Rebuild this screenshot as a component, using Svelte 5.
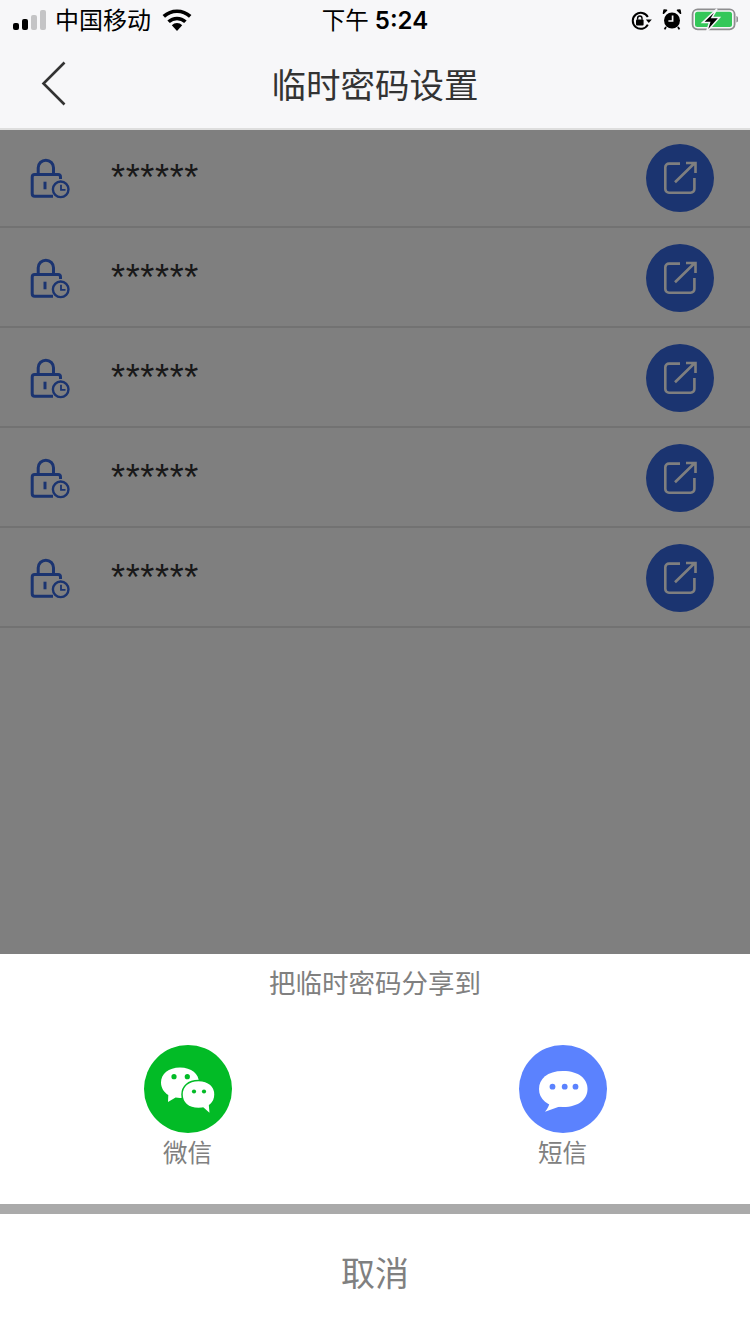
<script>
  // five temporary password rows, all masked
  const rows = [1, 2, 3, 4, 5];
</script>

<div class="page">
  <header class="top">
    <div class="status">
      <div class="left">
        <span class="signal"><i class="on s1"></i><i class="on s2"></i><i class="s3"></i><i class="s4"></i></span>
        <span class="carrier">中国移动</span>
        <svg class="wifi" width="30" height="22" viewBox="0 0 30 22">
          <path d="M15 22 9.800 16.200a7.400 7.400 0 0 1 10.400 0Z" fill="#000" />
          <path d="M6.600 12.800a12.200 12.200 0 0 1 16.800 0" fill="none" stroke="#000" stroke-width="3.600" />
          <path d="M1.800 7.400a19.400 19.400 0 0 1 26.400 0" fill="none" stroke="#000" stroke-width="3.600" />
        </svg>
      </div>
      <div class="time"><span class="cjk">下午</span> 5:24</div>
      <div class="right">
        <svg class="rot" width="22" height="20" viewBox="0 0 22 20">
          <path d="M16.800 13.600A8 8 0 1 1 16.800 6" fill="none" stroke="#000" stroke-width="2" />
          <path d="M14.800 8.400h6l-3 3.600Z" fill="#000" />
          <rect x="5" y="8.600" width="7.600" height="6" rx="1" fill="#000" />
          <path d="M6.600 8.800V7.200a2.200 2.200 0 0 1 4.400 0v1.600" fill="none" stroke="#000" stroke-width="1.400" />
        </svg>
        <svg class="alarm" width="20" height="21" viewBox="0 0 20 21">
          <circle cx="10" cy="11.500" r="8" fill="#000" />
          <path d="M1.400 4.400 4.600 1.200 2 1ZM18.600 4.400 15.400 1.200 18 1Z" fill="#000" stroke="#000" stroke-width="1.400" stroke-linejoin="round" />
          <path d="M4 18 2.600 20.400M16 18l1.400 2.400" stroke="#000" stroke-width="1.800" />
          <path d="M10.600 6.400v5.600H6.400" fill="none" stroke="#f7f7f9" stroke-width="1.700" />
        </svg>
        <svg class="battery" width="47" height="25" viewBox="0 0 47 25">
          <rect x="1.600" y="1.300" width="42" height="20" rx="5" fill="none" stroke="#8e8e90" stroke-width="1.800" />
          <rect x="4" y="3.700" width="37" height="15.200" rx="2.500" fill="#34c759" />
          <path d="M45.400 8v6.600a3.600 3.600 0 0 0 0-6.600Z" fill="#8e8e90" />
          <path d="M26 .8 11.500 14.600h7L15.500 24 28.500 9.600H21Z" fill="#000" stroke="#f7f7f9" stroke-width="1.500" />
        </svg>
      </div>
    </div>
    <nav class="bar">
      <svg class="back" width="26" height="46" viewBox="0 0 26 46">
        <path d="M23.500 1.500 2.500 22.500l21 21" fill="none" stroke="#333" stroke-width="2.600" />
      </svg>
      <h1>临时密码设置</h1>
    </nav>
  </header>

  <ul class="list">
    {#each rows as row (row)}
      <li class="row">
        <svg class="lock" width="42" height="42" viewBox="0 0 42 42">
          <path d="M10.200 16.500V9.800a7.650 7.650 0 0 1 15.300 0v6.700" fill="none" stroke="#3668e0" stroke-width="3" />
          <path d="M25 38.200H6.700a2.500 2.500 0 0 1-2.500-2.500V19a2.500 2.500 0 0 1 2.500-2.500h23.300a2.500 2.500 0 0 1 2.500 2.500v2" fill="none" stroke="#3668e0" stroke-width="3" />
          <path d="M17 23.700v7.600" stroke="#3668e0" stroke-width="3" />
          <circle cx="32.700" cy="31.300" r="7.800" fill="#fff" stroke="#3668e0" stroke-width="2.400" />
          <path d="M33 26.800v5h4.500" fill="none" stroke="#3668e0" stroke-width="1.800" />
        </svg>
        <span class="mask">******</span>
        <button class="edit" type="button" aria-label="分享">
          <svg width="36" height="36" viewBox="0 0 36 36">
            <path d="M18 3.600H7a3.700 3.700 0 0 0-3.700 3.700V29a3.700 3.700 0 0 0 3.700 3.700h21.700a3.700 3.700 0 0 0 3.700-3.700V18" fill="none" stroke="#fff" stroke-width="2.600" />
            <path d="M13 22.300 33 2.800M24 3h9.500v10" fill="none" stroke="#fff" stroke-width="2.600" />
          </svg>
        </button>
      </li>
    {/each}
  </ul>

  <div class="scrim"></div>

  <section class="sheet">
    <p class="title">把临时密码分享到</p>
    <div class="targets">
      <div class="target">
        <span class="disc wechat">
          <svg width="88" height="88" viewBox="0 0 88 88">
            <path d="M36 22.500C47.500 22.500 55 29 55 37.500S47.500 53 36 53c-1.500 0-3-.1-4.400-.4L24 57l.3-7C19.800 47.200 17 42.800 17 37.500 17 29 24.500 22.500 36 22.500Z" fill="#fff" />
            <path d="M54.500 35.500C65 35.500 71 41.500 71 49.500S65 63.500 54.500 63.500 38 57.500 38 49.500 44 35.500 54.500 35.500Z" fill="#fff" stroke="#02bb26" stroke-width="1.500" />
            <path d="M59 62l6.500 5.700-.8-8.700Z" fill="#fff" />
            <circle cx="30" cy="31.700" r="2.600" fill="#02bb26" />
            <circle cx="43.300" cy="31.700" r="2.600" fill="#02bb26" />
            <circle cx="50" cy="46.500" r="2.100" fill="#02bb26" />
            <circle cx="60" cy="46.500" r="2.100" fill="#02bb26" />
          </svg>
        </span>
        <span class="name">微信</span>
      </div>
      <div class="target">
        <span class="disc sms">
          <svg width="88" height="88" viewBox="0 0 88 88">
            <path d="M44 26C60 26 68.500 34 68.500 44S60 62 44 62 20 54 20 44 28 26 44 26Z" fill="#fff" />
            <path d="M31 54c0 5-2 9.500-5 12.700L42 61Z" fill="#fff" />
            <circle cx="33.500" cy="41.700" r="2.900" fill="#5b82fe" />
            <circle cx="45.700" cy="41.700" r="2.900" fill="#5b82fe" />
            <circle cx="56.500" cy="41.700" r="2.900" fill="#5b82fe" />
          </svg>
        </span>
        <span class="name">短信</span>
      </div>
    </div>
    <div class="gap"></div>
    <button class="cancel" type="button">取消</button>
  </section>
</div>

<style>
  :global(body) {
    margin: 0;
  }
  .page {
    position: relative;
    width: 750px;
    height: 1334px;
    overflow: hidden;
    background: #fff;
    font-family: "Noto Sans CJK SC", "Liberation Sans", sans-serif;
  }
  .top {
    position: relative;
    z-index: 1;
    height: 128px;
    background: #f7f7f9;
    border-bottom: 2px solid #dedede;
  }
  .status {
    position: relative;
    display: flex;
    justify-content: space-between;
    align-items: center;
    height: 40px;
    padding: 0 12px 0 13px;
    color: #000;
  }
  .left {
    display: flex;
    align-items: center;
  }
  .signal {
    display: flex;
    align-items: flex-end;
    gap: 3px;
    width: 42px;
    height: 22px;
    margin-top: -3px;
  }
  .signal i {
    width: 6px;
    background: #c4c4c6;
    border-radius: 2px;
  }
  .signal .on {
    background: #000;
  }
  .s1 {
    height: 7px;
  }
  .s2 {
    height: 11px;
  }
  .s3 {
    height: 15px;
  }
  .s4 {
    height: 20px;
  }
  .carrier {
    font-size: 24px;
    line-height: 40px;
    margin-top: -2px;
  }
  .wifi {
    margin-left: 11px;
  }
  .time {
    position: absolute;
    left: 0;
    right: 0;
    top: -1px;
    text-align: center;
    font: 600 24px/40px Inter, "Noto Sans CJK SC", sans-serif;
    pointer-events: none;
  }
  .cjk {
    font: 400 23.500px/40px "Noto Sans CJK SC", sans-serif;
  }
  .right {
    display: flex;
    align-items: center;
    gap: 10px;
  }
  .rot {
    margin-top: 2px;
    margin-right: -1px;
  }
  .alarm {
    margin-top: -2px;
  }
  .battery {
    margin-left: -1px;
    margin-top: 1px;
  }
  .bar {
    position: relative;
    height: 88px;
    display: flex;
    align-items: center;
    justify-content: center;
  }
  .back {
    position: absolute;
    left: 41px;
    top: 21px;
  }
  h1 {
    margin: -2px 0 0;
    font-size: 34.500px;
    font-weight: 400;
    color: #333;
    line-height: 88px;
  }
  .list {
    margin: -2px 0 0;
    padding: 0;
    list-style: none;
  }
  .row {
    display: flex;
    align-items: center;
    height: 98px;
    border-bottom: 2px solid #e4e4e4;
    padding-left: 28px;
    padding-right: 36px;
  }
  .lock {
    flex: none;
    margin-top: 4px;
  }
  .mask {
    flex: 1;
    margin-left: 41px;
    margin-top: 2px;
    font: 400 36px/40px "Liberation Sans", sans-serif;
    letter-spacing: 0.650px;
    color: #333;
  }
  .edit {
    display: grid;
    place-items: center;
    width: 68px;
    height: 68px;
    margin-top: 2px;
    padding: 0;
    background: #3668e0;
    border: 0;
    border-radius: 50%;
  }
  .scrim {
    position: absolute;
    inset: 130px 0 0;
    background: rgba(0, 0, 0, 0.5);
  }
  .sheet {
    position: absolute;
    left: 0;
    right: 0;
    bottom: 0;
    height: 380px;
    background: #fff;
  }
  .title {
    margin: -2px 0 2px;
    height: 60px;
    text-align: center;
    font-size: 26.500px;
    line-height: 60px;
    color: #808080;
  }
  .targets {
    display: flex;
    height: 190px;
    padding-top: 31px;
    box-sizing: border-box;
  }
  .target {
    flex: 1;
    display: flex;
    flex-direction: column;
    align-items: center;
  }
  .disc {
    width: 88px;
    height: 88px;
    border-radius: 50%;
  }
  .disc svg {
    display: block;
  }
  .wechat {
    background: #02bb26;
  }
  .sms {
    background: #5b82fe;
  }
  .name {
    font-size: 24.500px;
    line-height: 40px;
    margin-top: -1px;
    color: #808080;
  }
  .gap {
    height: 10px;
    background: #aaa;
  }
  .cancel {
    display: block;
    width: 100%;
    height: 120px;
    padding: 0 0 4px;
    border: 0;
    background: #fff;
    font: 400 34px/116px "Noto Sans CJK SC", sans-serif;
    color: #808080;
  }
</style>
